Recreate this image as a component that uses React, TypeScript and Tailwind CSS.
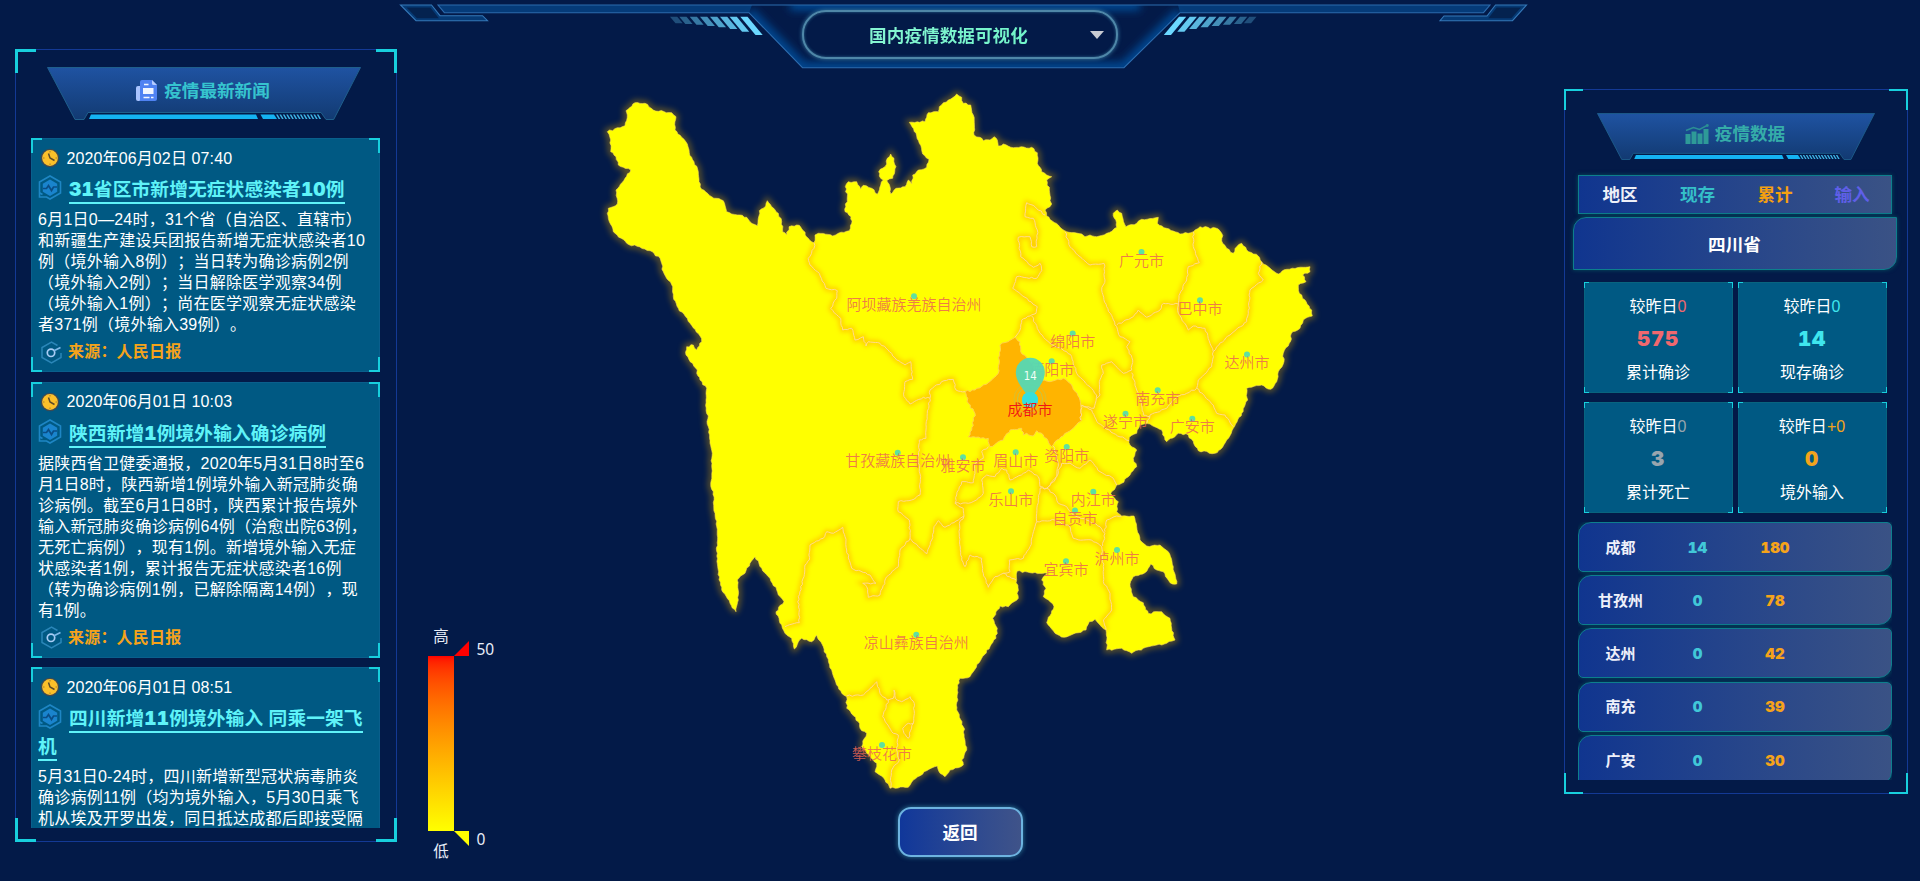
import React from "react";

/* ---------- geometry helpers ---------- */
type Pt = [number, number];
const ORIGIN: Record<string, Pt> = { A: [590, 80], B: [950, 80], C: [680, 400], D: [940, 380] };

// Each tile stores its vertices at three units per pixel, relative to the tile origin.
function pts(tile: string, s: string): Pt[] {
  const [ox, oy] = ORIGIN[tile];
  return s.trim().split(/\s+/).map((p) => {
    const [x, y] = p.split(",").map(Number);
    return [ox + x / 3, oy + y / 3] as Pt;
  });
}

// Subdivides a polyline and displaces the new vertices slightly to get a natural border.
function rough(list: Pt[], closed: boolean, amp = 0.9): string {
  const src = closed ? [...list, list[0]] : list;
  let d = `M${src[0][0].toFixed(1)} ${src[0][1].toFixed(1)}`;
  let seed = 7;
  const rnd = () => {
    seed = (seed * 16807) % 2147483647;
    return seed / 2147483647 - 0.5;
  };
  for (let i = 1; i < src.length; i++) {
    const [x0, y0] = src[i - 1];
    const [x1, y1] = src[i];
    const len = Math.hypot(x1 - x0, y1 - y0);
    const n = Math.max(1, Math.round(len / 2.6));
    for (let k = 1; k < n; k++) {
      const t = k / n;
      const o = rnd() * 2 * amp;
      d += `L${(x0 + (x1 - x0) * t - ((y1 - y0) / len) * o).toFixed(1)} ${(y0 + (y1 - y0) * t + ((x1 - x0) / len) * o).toFixed(1)}`;
    }
    d += `L${x1.toFixed(1)} ${y1.toFixed(1)}`;
  }
  return closed ? d + "Z" : d;
}

const OUTLINE = rough(
  [
    ...pts("A", "52,155 105,137 112,105 108,92 135,68 165,70 190,90 245,98 258,110 255,150 275,172 292,192 298,218 312,245 325,275 327,305 335,328 365,350 400,362 410,395 425,402 450,405 470,412 480,425 502,437 508,392 527,378 532,362 545,380 565,400 575,425 578,455 590,465 597,440 628,436 640,452 655,475 672,488 675,465 685,460 728,468 745,460 778,452 785,430 783,410 765,395 772,350 766,320 775,305 800,305 812,328 820,316 845,325 862,343 872,315 880,300 868,288 866,275 890,252 892,235 902,222 912,235 918,260 908,295 890,302 900,320 903,342 918,325 945,320 955,300 965,312 968,285 985,270 1010,262 1017,238 998,222 988,190 978,160 958,127 1005,125 1015,98 1045,95 1048,80 1075,60 1100,42"),
    ...pts("B", "35,52 40,70 62,75 70,105 72,165 90,172 100,182 120,180 132,170 142,180 145,198 160,192 190,203 245,202 262,218 262,250 275,275 290,285 305,290 290,300 298,330 300,362 305,372 285,390 290,408 325,435 350,455 395,462 405,470 420,465 440,470 470,460 500,442 490,400 502,390 515,400 528,440 560,430 575,418 625,412 622,430 650,445 690,462 730,455 750,440 805,447 815,460 818,490 830,505 850,520 860,500 875,490 890,510 925,528 935,545 955,560 985,582 1010,568 1060,562 1080,560 1080,575 1058,585 1068,605 1045,615 1048,640 1065,660 1085,690 1087,708 1060,720 1050,745 1028,755 1018,790 1000,820 1002,845 985,875 980,905 962,928 935,915 890,925 893,960 875,1000 850,1045 830,1080 812,1108 795,1120"),
    ...pts("D", "775,212 745,165 715,160 680,185 668,165 665,150 630,132 600,135 590,160 568,172 570,195 590,210 580,235 590,260 570,285 545,310 530,315 512,340 535,365 530,395 545,408 582,408 590,440 600,480 620,498 660,495 685,515 700,560 710,612 690,608 670,575 650,570 632,552 615,578 580,590 570,612 580,650 610,668 625,700 665,695 690,715 695,745 705,780 680,790 650,795 610,805 575,820 545,805 500,810 498,750 480,735 465,718 448,725 438,750 400,762 372,772 345,760 320,728 325,712 342,680 325,660 310,650 318,625 305,600 322,580 270,578 232,573 230,600 235,655 205,680 180,678 158,715 172,745 168,775 150,800 125,835 105,868"),
    ...pts("C", "870,830 840,835 832,870 830,930 850,980 860,1050 845,1080 850,1095 810,1110 795,1130 780,1120 772,1098 740,1112 700,1140 685,1162 630,1165 615,1140 585,1115 590,1090 560,1060 545,1040 560,1000 540,985 535,965 500,925 500,890 485,880 465,840 455,810 440,770 430,740 410,705 395,725 365,715 343,747 335,715 315,700 305,675 288,635 312,605 295,585 290,570 270,535 245,505 225,470 210,490 195,520 172,540 175,600 168,635 150,610 125,570 113,500 110,380 105,340 100,275 92,250 97,160 90,130 85,80 78,0"),
    ...pts("A", "348,940 350,925 330,900 320,880 322,870 288,825 290,800 310,795 320,810 335,785 330,768 300,730 265,685 250,650 248,620 220,575 210,535 180,512 110,490 70,455 52,400 55,385 82,372 78,330 105,295 122,270 85,255 78,230 62,215 62,180"),
  ],
  true
);

const CHENGDU = rough(
  [
    ...pts("B", "45,935 75,930 115,908 145,880 150,795 195,772 210,785 212,815 245,850 275,900 300,905 340,895 365,915 390,960 395,1020"),
    ...pts("D", "400,145 345,185 335,200 310,165 290,152 280,168 260,160 250,165 245,145 210,150 190,180 150,200 145,175 85,170 95,150 105,100 85,70"),
  ],
  true
);

const BORDERS = [
  pts("A", "672,488 672,505 655,535 660,555 688,580 708,625 742,632 740,655 722,685 752,715 758,750 785,745 795,780 820,770 828,798 835,785 870,790 905,820 920,840 945,855 962,845 968,898 945,905 942,950 960,972 1000,952 1020,955 1020,930 1062,902 1090,898 1098,930 1125,935"),
  pts("A", "1020,955 1012,1000 1008,1050 1008,1075").concat(pts("C", "718,120 715,180 722,230 720,285 695,300 655,305 655,335 688,360 690,415 715,440 740,462 755,420 762,380 775,362 795,382 835,360 852,348")),
  pts("C", "690,415 660,450 655,500 620,530 600,585 565,592 560,560 548,550 588,550 570,525 515,505 500,450 495,410 488,382 460,400 440,395 430,415 390,435 388,480 375,495 372,530 355,590 358,668 315,680"),
  pts("D", "72,408 58,430 58,470 65,540 75,560 90,525 125,535 130,580 145,622 165,590 190,580 210,575 208,540 250,535 270,500 285,440 290,425"),
  pts("D", "190,580 215,595 228,600"),
  pts("D", "145,200 125,215 130,235 105,250 105,280 100,308 65,305 50,345 45,370 70,385 72,408"),
  pts("D", "45,370 85,370 110,360 130,340 125,300 140,285 165,290 185,265 200,270 210,300 250,280 265,270 295,290 300,320 320,325"),
  pts("D", "340,198 355,250 350,290 320,325 345,300 365,250 390,250 420,265 450,240 480,275 520,295 530,315"),
  pts("D", "320,325 300,325 295,360 290,400 290,425 345,420 390,440 400,475 430,480 455,480 485,500 490,560 490,605 510,640 515,690 490,720 498,750"),
  pts("D", "320,325 345,345 355,370 380,380 400,405 440,420 480,440 495,460 488,498"),
  pts("D", "495,455 500,420 530,408 545,408"),
  pts("D", "422,120 425,75 455,90 475,130 520,160 568,182"),
  pts("B", "285,405 255,380 230,368 225,410 250,415 262,450 260,500 245,500 240,470 205,472 212,530 250,562 270,550 275,572 260,595 200,590 188,625 225,652 262,680 258,700 240,708 215,720 210,750 195,772"),
  pts("B", "245,708 270,760 300,790 350,815 365,830 380,880 420,920 440,945 432,985 400,980"),
  pts("B", "345,455 360,500 390,530 420,555 462,550 465,600 455,630 470,680 500,740 510,770 540,785 530,800 548,840 545,870 520,880 485,845 455,855 460,880 448,905 450,945 440,955"),
  pts("B", "545,878 560,930 575,970 580,1005 600,1010"),
  pts("B", "500,735 550,710 565,690 590,712 630,690 640,670 685,672"),
  pts("B", "730,455 730,500 748,548 715,560 710,600 690,640 685,675 685,700 715,750 730,738 765,745 780,790 790,815 785,860 745,900 740,925"),
  pts("B", "935,545 925,580 940,600 900,630 895,700 890,725 840,765 800,800 790,815"),
  pts("B", "740,925 765,950 790,975 800,1000 825,1005 850,1040"),
  pts("B", "740,925 710,940 680,950 650,985 600,1005 590,1030"),
  pts("C", "500,888 550,885 570,865 590,845 600,880 620,900 640,895 642,870 646,895 665,905 690,890 703,910 700,970 685,1015 672,1000 668,985 685,970 700,970"),
  pts("C", "625,900 608,950 640,1000 655,1005 650,1050 658,1080 635,1110 632,1165"),
].map((l) => rough(l, false, 0.8)).join("");

const CITIES: [string, number, number][] = [
  ["阿坝藏族羌族自治州", 914, 305],
  ["广元市", 1141.5, 260.7],
  ["巴中市", 1200, 309],
  ["绵阳市", 1072.7, 342.3],
  ["德阳市", 1051.7, 370],
  ["达州市", 1247, 363.3],
  ["南充市", 1157.7, 399],
  ["遂宁市", 1125.5, 422.5],
  ["广安市", 1192.3, 427.5],
  ["资阳市", 1066.7, 455.7],
  ["眉山市", 1015.7, 461],
  ["雅安市", 963, 466],
  ["乐山市", 1011, 500],
  ["内江市", 1093.3, 500.5],
  ["自贡市", 1075, 519.3],
  ["泸州市", 1117, 558.7],
  ["宜宾市", 1066, 570],
  ["甘孜藏族自治州", 897.7, 461.5],
  ["凉山彝族自治州", 916.3, 643.5],
  ["攀枝花市", 882, 753.7],
];

function ProvinceMap() {
  return (
    <svg className="block" width="1167" height="737" viewBox="397 70 1167 737">
      <defs>
        <clipPath id="land"><path d={OUTLINE} /></clipPath>
        <filter id="glow" x="-10%" y="-10%" width="120%" height="120%"><feGaussianBlur stdDeviation="3.2" /></filter>
        <filter id="soft"><feGaussianBlur stdDeviation="2.6" /></filter>
      </defs>
      <path d={OUTLINE} fill="none" stroke="#d8a000" strokeWidth="5" opacity=".5" filter="url(#glow)" />
      <path d={OUTLINE} fill="#ffff00" stroke="#f5dc50" strokeWidth="0.6" />
      <g clipPath="url(#land)">
        <path d={BORDERS} fill="none" stroke="#ff9000" strokeWidth="4" opacity=".5" filter="url(#soft)" />
        <path d={CHENGDU} fill="#ffb400" stroke="#ffd34a" strokeWidth="1" />
        <path d={BORDERS} fill="none" stroke="#ffdc8c" strokeWidth="1" />
      </g>
      <g fontFamily="'Noto Sans CJK SC', sans-serif" fontSize="15" textAnchor="middle" fontWeight="350">
        {CITIES.map(([name, x, y]) => (
          <g key={name}>
            <circle cx={x} cy={y - 8.700} r="3" fill="#5fe0a0" />
            <text x={x} y={y + 4.8} fill="#ec6652" fillOpacity=".85">{name}</text>
          </g>
        ))}
        <circle cx="1030" cy="399" r="16" fill="none" stroke="#7bd8a0" strokeWidth=".8" opacity=".35" />
        <circle cx="1030" cy="399" r="12.5" fill="none" stroke="#7bd8a0" strokeWidth="1" opacity=".45" />
        <circle cx="1030" cy="400" r="8" fill="#35dfe0" />
        <path d="M1030.3 402 C1028.5 393 1015.8 385 1015.8 372.3 A14.5 14.5 0 0 1 1044.8 372.3 C1044.8 385 1032.1 393 1030.3 402Z" fill="#55d8b4" opacity=".95" />
        <circle cx="1030" cy="400" r="8" fill="#35dfe0" opacity=".8" />
        <text x="1030.3" y="380" fill="#f2fff8" fontSize="11.5" fontWeight="400" fontFamily="'DejaVu Sans', sans-serif" textLength="13" lengthAdjust="spacingAndGlyphs">14</text>
        <text x="1030" y="414.8" fill="#f01414">成都市</text>
      </g>
    </svg>
  );
}

/* ---------- top ornament ---------- */
const STRIPES = [
  [670, 23.3, 0.28], [679.3, 24, 0.38], [689.7, 24.8, 0.5], [700, 26, 0.62],
  [710, 27.3, 0.72], [720, 29, 0.82], [729.6, 31.7, 0.92], [740.3, 35, 1],
];

function TopBar() {
  return (
    <header className="relative flex h-[70px] w-[1167px] justify-center">
      <svg className="absolute left-0 top-0" width="1167" height="70" viewBox="397 0 1167 70">
        <defs>
          <filter id="inner" x="-5%" y="-50%" width="110%" height="200%"><feGaussianBlur stdDeviation="4" /></filter>
          <clipPath id="bar"><path d="M438 5H1490L1483.5 12.7H1180L1124 67.7H802.5L749 12.7H444.4Z" /></clipPath>
          <clipPath id="tabs"><path d="M400.5 5H431.5L440 15.7H482.5L487.5 20.7H416Z M1495.5 5H1526.5L1512.5 20.7H1440L1444 16H1487Z" /></clipPath>
        </defs>
        <g clipPath="url(#bar)">
          <path d="M438 5H1490L1483.5 12.7H1180L1124 67.7H802.5L749 12.7H444.4Z" fill="#031a48" />
          <path d="M749 12.7L802.5 67.7H1124L1180 12.7M790 5H1140" fill="none" stroke="#054a94" strokeWidth="11" filter="url(#inner)" />
          <path d="M438 5H752L749 12.7H444.4Z M1178 5H1490L1483.5 12.7H1180Z" fill="#063f7e" opacity=".9" />
        </g>
        <path d="M438 5H1490L1483.5 12.7H1180L1124 67.7H802.5L749 12.7H444.4Z" fill="none" stroke="#2d6cae" strokeWidth="1.1" />
        <g clipPath="url(#tabs)">
          <path d="M400.5 5H431.5L440 15.7H482.5L487.5 20.7H416Z M1495.5 5H1526.5L1512.5 20.7H1440L1444 16H1487Z" fill="#04224f" stroke="#0a5fae" strokeWidth="5" strokeOpacity=".4" />
        </g>
        <path d="M400.5 5H431.5L440 15.7H482.5L487.5 20.7H416Z M1495.5 5H1526.5L1512.5 20.7H1440L1444 16H1487Z" fill="none" stroke="#3578b8" strokeWidth="1.1" />
        {STRIPES.map(([x, b, o]) => {
          const dx = (b - 16.7) * 0.83;
          const pl = `${x},16.7 ${x + 7.2},16.7 ${x + 7.2 + dx},${b} ${x + dx},${b}`;
          const m = (v: number) => 1926.5 - v;
          const pr = `${m(x)},16.7 ${m(x + 7.2)},16.7 ${m(x + 7.2 + dx)},${b} ${m(x + dx)},${b}`;
          return (
            <g key={x} fill="#6cd8ff" opacity={o}>
              <polygon points={pl} />
              <polygon points={pr} />
            </g>
          );
        })}
      </svg>
      <div className="relative -left-[20.5px] mt-[10px] flex h-[49px] w-[316px] items-center justify-center rounded-[24px] border-2 border-[#4f87a8] bg-[#031a48] shadow-[0_0_4px_#3a7fa8,inset_0_0_3px_#2c6a90]">
        <span className="bg-gradient-to-r from-[#86f5d2] to-[#6ef5c8] bg-clip-text pr-[25px] pl-[2px] pt-[4px] text-[17.6px] font-bold tracking-[0.05px] text-transparent">国内疫情数据可视化</span>
        <span className="absolute right-[12px] top-[19px] h-0 w-0 border-x-[7px] border-t-8 border-x-transparent border-t-[#c8cbd2]" />
      </div>
    </header>
  );
}

/* ---------- shared parts ---------- */
function Corners({ size, line }: { size: string; line: string }) {
  const base = "pointer-events-none absolute border-[#18cfdd] ";
  return (
    <>
      <i className={`${base}${size} ${line} -left-px -top-px !border-b-0 !border-r-0`} />
      <i className={`${base}${size} ${line} -right-px -top-px !border-b-0 !border-l-0`} />
      <i className={`${base}${size} ${line} -bottom-px -left-px !border-r-0 !border-t-0`} />
      <i className={`${base}${size} ${line} -bottom-px -right-px !border-l-0 !border-t-0`} />
    </>
  );
}

function Plate({ width, height, children }: { width: number; height: number; children: React.ReactNode }) {
  return (
    <div className="relative flex items-center justify-center pb-[4px] pr-[2px]" style={{ width, height }}>
      <svg className="absolute inset-0" width={width} height={height} viewBox="0 0 314 53" preserveAspectRatio="none">
        <defs>
          <linearGradient id="plate" x1="0" y1="0" x2="0" y2="1">
            <stop offset="0" stopColor="#1f53a2" />
            <stop offset="1" stopColor="#123a72" />
          </linearGradient>
        </defs>
        <path d="M.5.5H313.5L286.700 52.5H279L274 45.5H41L37 52.500H28Z" fill="url(#plate)" stroke="#1f5f8c" strokeWidth="1" />
        <path d="M44 47.500H209L211 52H42Z" fill="#14b3f2" />
        <path d="M213.500 47.500H227L230 52H216Z" fill="#14b3f2" />
        {Array.from({ length: 13 }, (_, i) => (
          <path key={i} d={`M${229 + i * 3.4} 47.500h1.700l2.600 4.500h-1.700Z`} fill="#3fb4e4" />
        ))}
      </svg>
      <div className="relative flex items-center">{children}</div>
    </div>
  );
}

/* ---------- icons ---------- */
const NewsIcon = () => (
  <svg width="21" height="22" viewBox="0 0 21 22">
    <path d="M0 8a2 2 0 0 1 2-2h3v15H2a2 2 0 0 1-2-2Z" fill="#a9c4ff" />
    <path d="M4 2a2 2 0 0 1 2-2h10l5 5v14a2 2 0 0 1-2 2H3a1.500 1.500 0 0 0 1-1.500Z" fill="#4f82f2" />
    <path d="M16 0l5 5h-3.500a1.500 1.500 0 0 1-1.500-1.500Z" fill="#b5ccff" />
    <path d="M8 3.800h4.500v1.500H8ZM7 8h10.500v6H7ZM7.500 16.800h6v1.500h-6ZM15 16.800h2.500v1.500H15Z" fill="#f1f6ff" />
  </svg>
);
const ClockIcon = () => (
  <svg width="20" height="20" viewBox="0 0 20 20">
    <circle cx="10" cy="10" r="9.300" fill="#3d4a52" />
    <circle cx="10" cy="10" r="7.900" fill="#fbc02a" />
    <path d="M8.500 5.500 10 10l4.500 2.500" fill="none" stroke="#5b4a2a" strokeWidth="1.500" />
    <path d="M10 3v1.500M10 15.500V17M3 10h1.500M15.500 10H17" stroke="#a8802a" strokeWidth="1" />
  </svg>
);
const PulseIcon = () => (
  <svg width="24" height="25" viewBox="0 0 24 25" fill="none">
    <path d="M4.500 19.500 1.500 17.800V7L12 1l10.500 6v11L12 24l-3.500-2H1.500v-4.500" stroke="#1e86c4" strokeWidth="1.600" />
    <path d="M12 4.500 19.200 8.700v8L12 21 4.800 16.700v-8Z" fill="#1a84cd" />
    <path d="M5 13.500h3.500l2-3 3 5 2-3.500H19" stroke="#0a4d86" strokeWidth="1.700" />
  </svg>
);
const SourceIcon = () => (
  <svg width="21" height="23" viewBox="0 0 21 23" fill="none">
    <path d="M16.500 4.500 10.500 1 1 6.500v10L10.500 22l9.500-5.500V12" stroke="#2a86b8" strokeWidth="1.500" />
    <circle cx="10" cy="11.800" r="3.700" stroke="#a9cdf5" strokeWidth="1.700" />
    <path d="M13 9.800 19.500 6.500" stroke="#7db9e8" strokeWidth="1.700" />
  </svg>
);
const ChartIcon = () => (
  <svg width="24" height="20" viewBox="0 0 24 20">
    <path d="M.5 10H5.500v10H.5ZM6.500 7.500h5V20h-5ZM12.500 9.500h5V20h-5ZM18.500 5H23.500v15h-5Z" fill="#2e9a98" />
    <path d="M1 6.500 8.500 3.500l6 2L22 1.500" fill="none" stroke="#2b8f94" strokeWidth="1.500" />
    <circle cx="22.300" cy="1.500" r="1.400" fill="#2b8f94" />
  </svg>
);

/* ---------- news ---------- */
// Heavy wide digits inside bold headings.
const Digits = ({ children }: { children: React.ReactNode }) => (
  <span className="font-['Inter','Liberation_Sans',sans-serif] text-[1.02em] font-black leading-none tabular-nums">{children}</span>
);
const heavy = (s: string) => s.split(/(\d+)/).map((p, i) => (/^\d+$/.test(p) ? <Digits key={i}>{p}</Digits> : p));

const NEWS = [
  {
    date: "2020年06月02日 07:40",
    title: ["31省区市新增无症状感染者10例"],
    body: [
      "6月1日0—24时，31个省（自治区、直辖市）",
      "和新疆生产建设兵团报告新增无症状感染者10",
      "例（境外输入8例）；当日转为确诊病例2例",
      "（境外输入2例）；当日解除医学观察34例",
      "（境外输入1例）；尚在医学观察无症状感染",
      "者371例（境外输入39例）。",
    ],
  },
  {
    date: "2020年06月01日 10:03",
    title: ["陕西新增1例境外输入确诊病例"],
    body: [
      "据陕西省卫健委通报，2020年5月31日8时至6",
      "月1日8时，陕西新增1例境外输入新冠肺炎确",
      "诊病例。截至6月1日8时，陕西累计报告境外",
      "输入新冠肺炎确诊病例64例（治愈出院63例，",
      "无死亡病例），现有1例。新增境外输入无症",
      "状感染者1例，累计报告无症状感染者16例",
      "（转为确诊病例1例，已解除隔离14例），现",
      "有1例。",
    ],
  },
  {
    date: "2020年06月01日 08:51",
    title: ["四川新增11例境外输入 同乘一架飞", "机"],
    body: [
      "5月31日0-24时，四川新增新型冠状病毒肺炎",
      "确诊病例11例（均为境外输入，5月30日乘飞",
      "机从埃及开罗出发，同日抵达成都后即接受隔",
    ],
  },
];

function NewsCard({ item }: { item: (typeof NEWS)[number] }) {
  return (
    <article className="relative w-[349px] shrink-0 border border-[#0a5f8c] bg-[#005983] pb-[2px] pl-[6.500px] pt-[3px] text-white">
      <Corners size="h-[15px] w-[11px]" line="border-2" />
      <div className="flex h-8 items-center pl-[2px]">
        <ClockIcon />
        <span className="ml-[6.500px] mt-[1px] text-base tracking-[0.12px]">{item.date}</span>
      </div>
      <h3 className="mb-[4px] mt-[3.500px] text-[18.720px] font-bold leading-[27.5px] tracking-[0.12px] text-[#5ff3f8]">
        {item.title.map((t, i) => (
          <span key={t} className="flex h-[27.5px] items-center whitespace-nowrap">
            {i === 0 && <span className="-mt-[7px] mr-[7px]"><PulseIcon /></span>}
            <span className="border-b-2 border-[#5ff3f8] leading-[24px]">{heavy(t)}</span>
          </span>
        ))}
      </h3>
      <p className="text-base leading-[21px] tracking-[0.250px]">
        {item.body.map((l) => <span key={l} className="block whitespace-nowrap">{l}</span>)}
      </p>
      <div className="flex h-[34px] items-center pl-[3px]">
        <SourceIcon />
        <span className="ml-[6px] text-base font-bold tracking-[0.2px] text-[#f5a31a]">来源：人民日报</span>
      </div>
    </article>
  );
}

/* ---------- statistics ---------- */
const STATS = [
  ["0", "575", "累计确诊", "text-[#f0686e]"],
  ["0", "14", "现存确诊", "text-[#3fe6ee]"],
  ["0", "3", "累计死亡", "text-[#98a5ae]"],
  ["+0", "0", "境外输入", "text-[#f2a41c]"],
];
const ROWS = [
  ["成都", "14", "180"],
  ["甘孜州", "0", "78"],
  ["达州", "0", "42"],
  ["南充", "0", "39"],
  ["广安", "0", "30"],
];
const pill = "border-[1.5px] border-[#0d7f8d] bg-gradient-to-r from-[#10358f] to-[#3a5285] shadow-[0_0_4px_#06505f]";

export default function App() {
  return (
    <div className="flex h-[881px] w-[1920px] overflow-hidden bg-[#031a48] font-['Liberation_Sans','Noto_Sans_CJK_SC',sans-serif] [text-spacing-trim:space-all]">
      <aside className="relative ml-[15px] mt-[49px] flex h-[793px] w-[382px] shrink-0 flex-col items-center border border-[#133995]">
        <Corners size="h-6 w-[21px]" line="border-[3px]" />
        <div className="mt-[17px] mr-[4px]">
          <Plate width={314} height={53}>
            <NewsIcon />
            <h2 className="ml-[7px] text-[17.600px] font-bold text-[#36c4cf]">疫情最新新闻</h2>
          </Plate>
        </div>
        <div className="mr-[2px] mt-[18px] flex h-[690px] flex-col gap-[9.500px] overflow-hidden">
          {NEWS.map((n) => <NewsCard key={n.date} item={n} />)}
        </div>
      </aside>

      <main className="relative flex w-[1167px] shrink-0 flex-col items-center">
        <TopBar />
        <ProvinceMap />
        <button className="relative -left-[20.500px] flex h-[50px] w-[125px] items-center justify-center rounded-[13px] border-2 border-[#6db3e0] bg-gradient-to-r from-[#10379a] to-[#3f5389] pt-[2px] text-[17.600px] font-bold text-white shadow-[0_0_5px_#2f7d9c]">返回</button>
        <div className="absolute left-[31px] top-[624px] flex font-['Noto_Sans','Noto_Sans_CJK_SC',sans-serif] text-[15.500px] leading-6 text-[#e8edf8]">
          <div className="flex w-[26px] flex-col items-center">
            <span>高</span>
            <div className="my-[8px] h-[175px] w-[26px] bg-gradient-to-b from-[#ff0000] to-[#ffff00]" />
            <span>低</span>
          </div>
          <svg className="mt-[17px]" width="15" height="205" viewBox="0 0 15 205">
            <path d="M0 15 15 0V15Z" fill="#f00" />
            <path d="M0 190H15V205Z" fill="#ff0" />
          </svg>
          <div className="ml-[7.500px] mt-[13px] flex h-[214px] flex-col justify-between">
            <span>50</span>
            <span>0</span>
          </div>
        </div>
      </main>

      <aside className="relative mt-[89px] flex h-[705px] w-[344px] shrink-0 flex-col items-center border border-[#133995]">
        <Corners size="h-[21px] w-[19px]" line="border-[2.500px]" />
        <div className="mt-[23px]">
          <Plate width={278} height={47}>
            <ChartIcon />
            <h2 className="ml-[6px] text-[17.600px] font-bold text-[#35ada9]">疫情数据</h2>
          </Plate>
        </div>
        <div className={`mr-[2px] mt-[15px] grid h-[39px] w-[314px] grid-cols-4 items-center pt-px text-center text-[17.600px] font-bold ${pill}`}>
          <span className="pl-[4px] text-[#eef0f8]">地区</span>
          <span className="pl-[3px] text-[#35bfc8]">现存</span>
          <span className="pl-[2px] text-[#f5a010]">累计</span>
          <span className="text-[#5f5fe8]">输入</span>
        </div>
        <div className={`mr-[3px] mt-[3px] flex h-[53px] w-[324px] shrink-0 items-center justify-center rounded-br-[13px] rounded-tl-[13px] pt-[3px] text-[17.600px] font-bold text-white ${pill}`}>四川省</div>
        <div className="mr-[2px] mt-[12px] grid grid-cols-2 gap-x-[5px] gap-y-[9px]">
          {STATS.map(([delta, value, label, color]) => (
            <div key={label} className="relative flex h-[111px] w-[149px] flex-col items-center border border-[#08647f] bg-[#005983] pt-[12px] text-white">
              <Corners size="h-[6px] w-[5px]" line="border-[1.500px]" />
              <span className="text-base leading-6">较昨日<span className={color}>{delta}</span></span>
              <span className={`mt-[6px] font-['Inter','Liberation_Sans',sans-serif] text-[20.500px] font-black leading-7 tabular-nums tracking-[0.8px] ${color}`}>{value}</span>
              <span className="mt-[8px] text-base leading-6">{label}</span>
            </div>
          ))}
        </div>
        <div className="mr-[2px] mt-[9px] flex h-[258px] flex-col gap-[3.200px] overflow-hidden">
          {ROWS.map(([name, now, total]) => (
            <div key={name} className={`grid h-[50px] w-[314px] shrink-0 grid-cols-4 items-center rounded-[5px] rounded-br-[13px] rounded-tl-[13px] pt-[2px] text-center ${pill}`}>
              <span className="pl-[5px] text-[15px] font-bold text-[#eef0fa]">{name}</span>
              <span className="pl-[3px] font-['Inter','Liberation_Sans',sans-serif] text-[15px] font-black tabular-nums text-[#41c8d8]">{now}</span>
              <span className="pl-[2px] font-['Inter','Liberation_Sans',sans-serif] text-[15px] font-black tabular-nums text-[#f5a31a]">{total}</span>
              <span />
            </div>
          ))}
        </div>
      </aside>
    </div>
  );
}
